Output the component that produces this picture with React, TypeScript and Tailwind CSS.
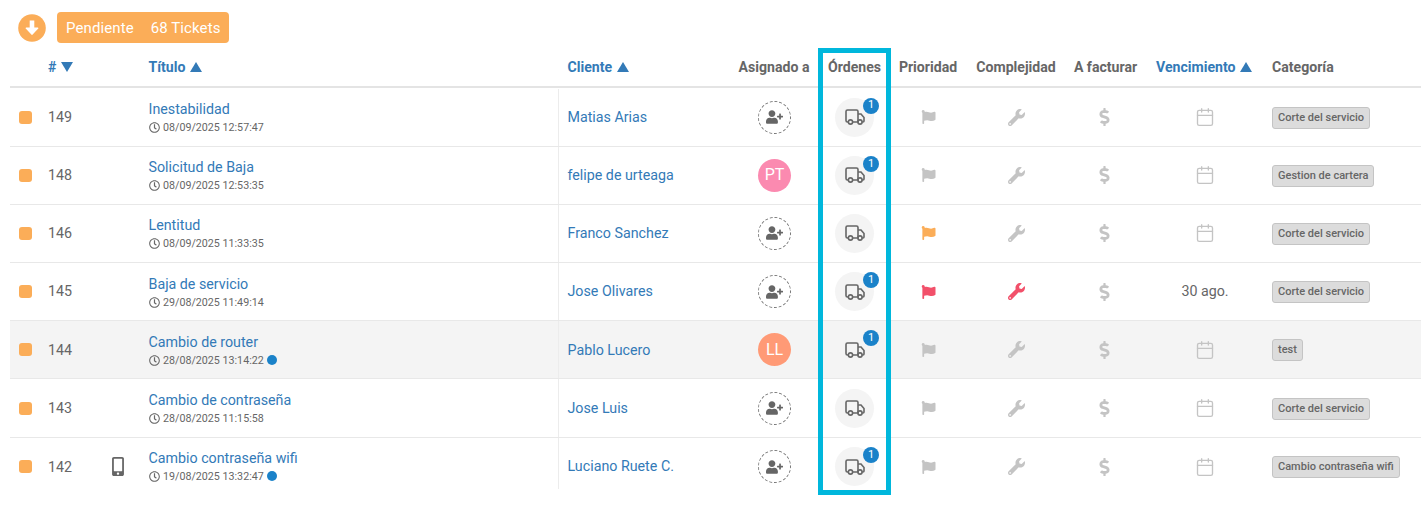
import React from "react";
import { FaFlag, FaWrench, FaDollarSign, FaRegClock, FaUserPlus, FaMobileAlt } from "react-icons/fa";
import { Calendar } from "lucide-react";

type Row = {
  id: number; title: string; date: string; dot?: boolean; mobile?: boolean; client: string;
  avatar?: { t: string; c: string }; order: boolean; flag?: string; wrench?: string; due?: string; cat: string; hl?: boolean;
};

const rows: Row[] = [
  { id: 149, title: "Inestabilidad", date: "08/09/2025 12:57:47", client: "Matias Arias", order: true, cat: "Corte del servicio" },
  { id: 148, title: "Solicitud de Baja", date: "08/09/2025 12:53:35", client: "felipe de urteaga", avatar: { t: "PT", c: "bg-[#fb8ab0]" }, order: true, cat: "Gestion de cartera" },
  { id: 146, title: "Lentitud", date: "08/09/2025 11:33:35", client: "Franco Sanchez", order: false, flag: "text-[#fbad58]", cat: "Corte del servicio" },
  { id: 145, title: "Baja de servicio", date: "29/08/2025 11:49:14", client: "Jose Olivares", order: true, flag: "text-[#f2506a]", wrench: "text-[#f2506a]", due: "30 ago.", cat: "Corte del servicio" },
  { id: 144, title: "Cambio de router", date: "28/08/2025 13:14:22", dot: true, client: "Pablo Lucero", avatar: { t: "LL", c: "bg-[#ff9a76]" }, order: true, cat: "test", hl: true },
  { id: 143, title: "Cambio de contraseña", date: "28/08/2025 11:15:58", client: "Jose Luis", order: false, cat: "Corte del servicio" },
  { id: 142, title: "Cambio contraseña wifi", date: "19/08/2025 13:32:47", dot: true, mobile: true, client: "Luciano Ruete C.", order: true, cat: "Cambio contraseña wifi" },
];

const cols = "grid grid-cols-[38px_52px_36px_422px_172px_89px_71px_77px_98px_82px_116px_1fr]";

function Sort({ up }: { up: boolean }) {
  return (
    <svg viewBox="0 0 12 10" className="inline-block w-[12px] h-[10px] ml-[4.5px] align-[-0.5px] fill-current">
      <polygon points={up ? "6,0 12,10 0,10" : "0,0 12,0 6,10"} />
    </svg>
  );
}

function TruckIcon() {
  return (
    <svg viewBox="0 0 20 16" className="w-[20px] h-[16px] fill-none stroke-[#666] stroke-[1.6]">
      <path d="M3.3 13H2.5A1.5 1.5 0 0 1 1 11.5V2.5A1.5 1.5 0 0 1 2.5 1H11.5A1.5 1.5 0 0 1 13 2.5V13H7.7M13 5H16L19 8.5V12A1 1 0 0 1 18 13H17.2M13 13H12.8" />
      <circle cx="5.5" cy="13" r="2.1" />
      <circle cx="15" cy="13" r="2.1" />
    </svg>
  );
}

export default function App() {
  return (
    <div className="relative w-[1421px] h-[524px] bg-white overflow-hidden text-[14px] text-[#666]" style={{ fontFamily: "Roboto, sans-serif" }}>
      <div className="flex items-start gap-[11px] pl-[17.5px] pt-[12px] h-[46px]">
        <svg viewBox="0 0 28 28" className="w-[28px] h-[28px] mt-[1.5px]">
          <circle cx="14" cy="14" r="13.8" fill="#fbad58" />
          <path d="M11.7 6.5h4.6v7h3.6a.6.6 0 0 1 .4 1l-5.9 6.2a.6.6 0 0 1-.8 0l-5.9-6.2a.6.6 0 0 1 .4-1h3.6z" fill="#fff" />
        </svg>
        <div className="h-[31px] w-[172px] rounded-[4px] bg-[#fbad58] text-white text-[15px] flex items-center pl-[9.5px] pt-[2px] gap-[17px] tracking-[0.1px]">
          <span>Pendiente</span>
          <span>68 Tickets</span>
        </div>
      </div>

      <div className="ml-[10px]">
        <div className={`${cols} h-[42px] mb-[0.5px] items-center font-bold text-[14.1px] text-[#666] border-b-2 border-[#e4e4e4] pt-[3px]`}>
          <div />
          <div className="text-[#337ab7]">#<Sort up={false} /></div>
          <div />
          <div className="pl-[12.5px] text-[#337ab7]">Título<Sort up /></div>
          <div className="pl-[9.5px] text-[#337ab7]">Cliente<Sort up /></div>
          <div className="text-center pr-[1px]">Asignado a</div>
          <div className="text-center">Órdenes</div>
          <div className="text-center pr-[1px]">Prioridad</div>
          <div className="text-center">Complejidad</div>
          <div className="text-center pr-[1px]">A facturar</div>
          <div className="text-center text-[#337ab7] pr-[2px]">Vencimiento<Sort up /></div>
          <div className="pl-[9px]">Categoría</div>
        </div>

        {rows.map((r, i) => (
          <div key={r.id} className={`${cols} h-[58.2px] items-center ${i < rows.length - 1 ? "border-b border-[#e8e8e8]" : ""} ${r.hl ? "bg-[#f4f4f4]" : ""}`}>
            <div className="pl-[9px]">
              <div className="w-[13px] h-[13px] rounded-[3px] bg-[#fbad58]" />
            </div>
            <div className="text-[14.25px] pt-[1px]">{r.id}</div>
            <div className="flex justify-center">
              {r.mobile && <FaMobileAlt className="w-[14px] h-[19px] text-[#666]" />}
            </div>
            <div className={`pl-[12.5px] leading-none ${i === rows.length - 1 ? "pb-[1px]" : "pt-[1px]"}`}>
              <div className="text-[14.25px] text-[#337ab7] leading-[18px] mb-[2px]">{r.title}</div>
              <div className="flex items-center text-[10.7px] text-[#666] leading-[15px]">
                <FaRegClock className="w-[11px] h-[11px] mr-[3.5px]" />
                <span>{r.date}</span>
                {r.dot && <span className="ml-[3px] w-[10px] h-[10px] rounded-full bg-[#1a82c9]" />}
              </div>
            </div>
            <div className={`pl-[8.5px] flex items-center border-l border-[#ececec] text-[14.25px] text-[#337ab7] ${i < rows.length - 1 ? "h-full pt-[1px]" : "h-[51px] self-start pt-[7px]"}`}>{r.client}</div>
            <div className="flex justify-center">
              {r.avatar ? (
                <div className={`w-[33px] h-[33px] rounded-full ${r.avatar.c} text-white text-[16px] flex items-center justify-center`}>{r.avatar.t}</div>
              ) : (
                <div className="w-[33px] h-[33px] rounded-full border border-dashed border-[#777] flex items-center justify-center">
                  <FaUserPlus className="w-[17px] h-[14px] text-[#666]" />
                </div>
              )}
            </div>
            <div className="flex justify-center">
              <div className={`relative w-[39px] h-[39px] rounded-full flex items-center justify-center ${r.hl ? "" : "bg-[#f4f4f4]"}`}>
                <TruckIcon />
                {r.order && (
                  <span className="absolute top-0 right-[-5px] w-[16px] h-[16px] rounded-full bg-[#1a82c9] text-white text-[11px] flex items-center justify-center">1</span>
                )}
              </div>
            </div>
            <div className="flex justify-center">
              <FaFlag className={`w-[15px] h-[14px] ${r.flag ?? "text-[#c4c4c4]"}`} />
            </div>
            <div className="flex justify-center">
              <FaWrench className={`w-[17px] h-[17px] ${r.wrench ?? "text-[#c4c4c4]"}`} />
            </div>
            <div className="flex justify-center pr-[3px]">
              <FaDollarSign className="w-[17px] h-[18px] text-[#c4c4c4]" />
            </div>
            <div className="flex justify-center">
              {r.due ? <span className="text-[14.25px]">{r.due}</span> : <Calendar className="w-[20px] h-[20px] text-[#c4c4c4]" strokeWidth={1.6} />}
            </div>
            <div className="pl-[9px]">
              <span className="inline-block h-[22px] leading-[20px] px-[5px] rounded-[3px] border border-[#c4c4c4] bg-[#dcdcdc] text-[11px] font-medium text-[#666]">{r.cat}</span>
            </div>
          </div>
        ))}
      </div>

      <div className="absolute left-[818px] top-[48px] w-[73px] h-[447px] border-[5px] border-[#00b7dc]" />
    </div>
  );
}
